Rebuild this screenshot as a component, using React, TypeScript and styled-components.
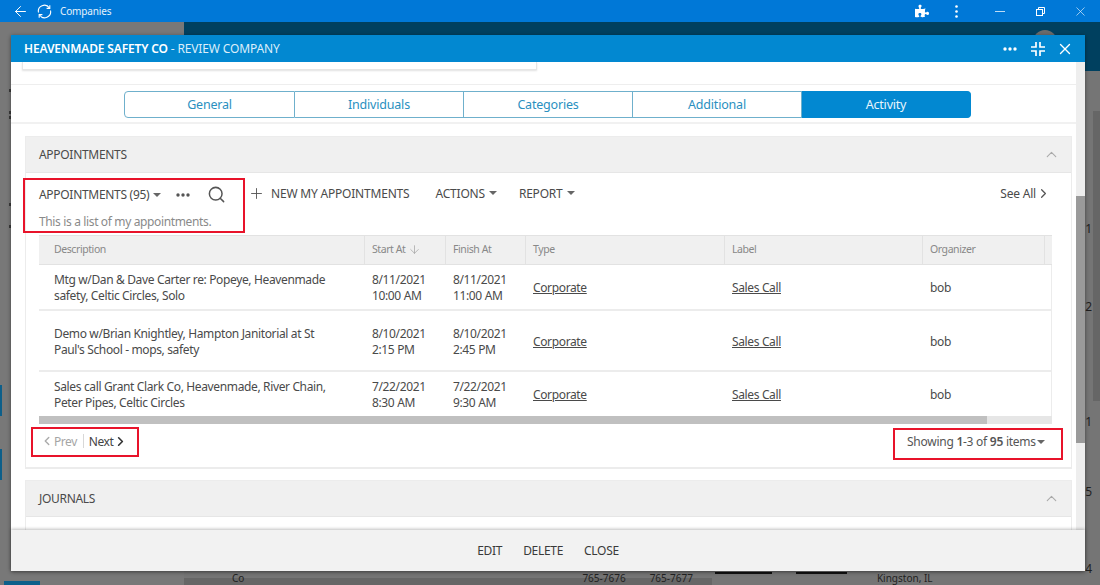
import React from 'react';
import styled, { createGlobalStyle } from 'styled-components';
import { ArrowLeft, ChevronLeft, ChevronRight, ChevronUp, ArrowDown, Plus, Search, X } from 'lucide-react';
import { FaPuzzlePiece } from 'react-icons/fa';

const GlobalStyle = createGlobalStyle`
  html, body {
    margin: 0;
    padding: 0;
    background: #777;
    overflow: hidden;
  }
  * {
    box-sizing: border-box;
  }
`;

const COLUMNS = '326px 81px 80px 199px 198px 122px 1fr';

const Page = styled.div`
  position: relative;
  width: 1100px;
  height: 585px;
  display: flex;
  flex-direction: column;
  overflow: hidden;
  font-family: 'Noto Sans', 'Open Sans', sans-serif;
  font-size: 12px;
  color: #4a4a4a;
`;

const TopBar = styled.div`
  height: 22px;
  flex: none;
  display: flex;
  align-items: center;
  background: #0078d7;
  color: #fff;
  padding-left: 12px;
`;

const TopTitle = styled.span`
  margin-left: 1px;
  font-size: 10px;
  letter-spacing: -0.15px;
  color: #e4f1fb;
`;

const TopRight = styled.div`
  margin-left: auto;
  display: flex;
  align-items: center;
`;

const TopIcon = styled.span<{ $w: number }>`
  width: ${(p) => p.$w}px;
  display: flex;
  align-items: center;
  justify-content: center;
`;

const Behind = styled.div`
  flex: 1;
  min-height: 0;
  display: flex;
  background: #787878;
`;

const BehindLeft = styled.div`
  width: 184px;
  flex: none;
  display: flex;
  flex-direction: column;
`;

const LeftMark = styled.div<{ $top: number }>`
  width: 2px;
  height: 3px;
  margin: ${(p) => p.$top}px 0 0 9px;
  background: #3a3a3a;
`;

const BlueTick = styled.div<{ $top: number }>`
  width: 2px;
  height: 31px;
  margin-top: ${(p) => p.$top}px;
  background: #0d5f8a;
`;

const BlueFoot = styled.div`
  width: 36px;
  height: 4px;
  margin: auto 0 0 4px;
  background: #0d5f8a;
`;

const BehindMain = styled.div`
  flex: 1;
  min-width: 0;
  display: flex;
  flex-direction: column;
  background: #757575;
`;

const Band = styled.div`
  height: 49px;
  background: #00405f;
  flex: none;
  display: flex;
  justify-content: flex-end;
  padding: 8px 43px 0 0;
`;

const Avatar = styled.div`
  width: 24px;
  height: 24px;
  border-radius: 50%;
  background: #6c6c6c;
`;

const BehindMiddle = styled.div`
  flex: 1;
  min-height: 0;
  display: flex;
  justify-content: flex-end;
`;

const BehindNums = styled.div`
  display: flex;
  flex-direction: column;
  align-items: flex-end;
  padding: 151px 1px 0 0;
  font-size: 12px;
  line-height: 14px;
  color: #1f1f1f;
`;

const BehindNum = styled.span<{ $gap: number }>`
  margin-top: ${(p) => p.$gap}px;
`;

const BehindTrack = styled.div`
  width: 7px;
  height: 290px;
  margin-top: 40px;
  background: #666;
`;

const BehindBottom = styled.div`
  height: 14px;
  flex: none;
  display: flex;
  align-items: flex-start;
  font-size: 10px;
  line-height: 14px;
  color: #222;
  background: linear-gradient(#666, #666) 0 7px / 528px 7px no-repeat;
`;

const BottomText = styled.span<{ $left: number }>`
  margin-left: ${(p) => p.$left}px;
  white-space: nowrap;
`;

const BottomRule = styled.span<{ $left: number; $w: number }>`
  width: ${(p) => p.$w}px;
  height: 2px;
  margin: 1px 0 0 ${(p) => p.$left}px;
  background: #111;
`;

const Modal = styled.div`
  position: absolute;
  left: 11px;
  top: 35px;
  width: 1074px;
  height: 536px;
  display: flex;
  flex-direction: column;
  background: #fff;
  box-shadow: 0 1px 4px rgba(0, 0, 0, 0.45);
`;

const ModalHeader = styled.div`
  height: 27px;
  flex: none;
  display: flex;
  align-items: center;
  padding: 0 11px 0 13px;
  background: #0288d1;
  color: #fff;
  font-size: 12px;
`;

const HeaderTitle = styled.div`
  letter-spacing: -0.15px;
  color: #dceefa;
  strong {
    font-weight: 600;
    color: #fff;
  }
`;

const HeaderIcons = styled.div`
  margin-left: auto;
  display: flex;
  align-items: center;
  gap: 11px;
`;

const HeaderDots = styled.span`
  display: flex;
  margin-right: 3px;
`;

const ModalMiddle = styled.div`
  flex: 1;
  min-height: 0;
  display: flex;
`;

const Scroller = styled.div`
  flex: 1;
  min-width: 0;
  overflow: hidden;
`;

const ScrollTrack = styled.div`
  width: 9px;
  flex: none;
  background: #eeeeee;
  padding-top: 134px;
`;

const ScrollThumb = styled.div`
  height: 247px;
  background: #9a9a9a;
`;

const CutCard = styled.div`
  margin-left: 11px;
  width: 515px;
  height: 8px;
  background: #fff;
  border: 1px solid #e6e6e6;
  border-top: 0;
  box-shadow: 0 1px 2px rgba(0, 0, 0, 0.12);
`;

const TabStrip = styled.div`
  margin-top: 14px;
  height: 40px;
  display: flex;
  padding: 6px 0 0 113px;
  border-top: 1px solid #eeeeee;
  border-bottom: 2px solid #f1f1f1;
`;

const Tab = styled.div<{ $active?: boolean }>`
  width: 169px;
  height: 27px;
  display: flex;
  align-items: center;
  justify-content: center;
  font-size: 12.5px;
  letter-spacing: -0.2px;
  color: ${(p) => (p.$active ? '#e8f5fc' : '#2a90bf')};
  background: ${(p) => (p.$active ? '#0288d1' : '#fff')};
  border: 1px solid ${(p) => (p.$active ? '#0288d1' : '#6fb0cc')};
  border-left-width: 0;
  &:first-child {
    width: 171px;
    border-left-width: 1px;
    border-radius: 4px 0 0 4px;
  }
  &:last-child {
    border-radius: 0 4px 4px 0;
  }
`;

const Card = styled.div<{ $top: number }>`
  margin: ${(p) => p.$top}px 4px 0 14px;
  border: 1px solid #ececec;
  border-bottom-width: 2px;
  background: #fff;
`;

const CardHeader = styled.div`
  height: 36px;
  display: flex;
  align-items: center;
  justify-content: space-between;
  padding: 0 11px 0 13px;
  background: #f0f0f0;
  border-bottom: 1px solid #e6e6e6;
  font-size: 12px;
  letter-spacing: -0.3px;
  color: #4a4a4a;
`;

const CardFiller = styled.div`
  height: 30px;
`;

const Toolbar = styled.div`
  display: flex;
  align-items: flex-start;
  padding-top: 5px;
`;

const RedBox = styled.div`
  border: 2px solid #e8132a;
`;

const ListBox = styled(RedBox)`
  margin-left: -3px;
  margin-bottom: 1px;
  width: 222px;
  height: 55px;
  padding: 3px 0 0 14px;
`;

const ListRow = styled.div`
  height: 23px;
  display: flex;
  align-items: center;
`;

const ToolText = styled.span<{ $tight?: boolean }>`
  font-size: 12px;
  letter-spacing: ${(p) => (p.$tight ? '-0.3px' : '-0.2px')};
  color: #4a4a4a;
  white-space: nowrap;
`;

const ListHint = styled.div`
  margin-top: 7px;
  font-size: 12px;
  letter-spacing: -0.36px;
  color: #8a8a8a;
`;

const Caret = styled.span<{ $left: number; $color?: string }>`
  display: inline-block;
  margin-left: ${(p) => p.$left}px;
  border-left: 4.5px solid transparent;
  border-right: 4.5px solid transparent;
  border-top: 4.5px solid ${(p) => p.$color || '#666'};
`;

const ToolActions = styled.div`
  flex: 1;
  height: 26px;
  padding-right: 20px;
  display: flex;
  align-items: center;
  margin-top: 2px;
`;

const ToolItem = styled.div<{ $left: number }>`
  display: flex;
  align-items: center;
  margin-left: ${(p) => p.$left}px;
`;

const SeeAll = styled.div`
  margin-left: auto;
  display: flex;
  align-items: center;
`;

const Table = styled.div`
  margin: 1px 0 0 13px;
  width: 1013px;
`;

const HeadRow = styled.div`
  height: 30px;
  display: grid;
  grid-template-columns: ${COLUMNS};
  background: #f0f0f0;
  border-top: 1px solid #e2e2e2;
  border-bottom: 1px solid #e2e2e2;
`;

const HeadCell = styled.div`
  display: flex;
  align-items: center;
  padding: 0 0 2px 7px;
  font-size: 10.5px;
  letter-spacing: -0.42px;
  color: #888;
  border-right: 1px solid #e2e2e2;
  &:first-child {
    padding-left: 15px;
  }
  &:last-child {
    border-right: 0;
  }
`;

const SortArrow = styled(ArrowDown)`
  margin-left: 3px;
`;

const Row = styled.div<{ $height: number; $last?: boolean }>`
  height: ${(p) => p.$height}px;
  display: grid;
  grid-template-columns: ${COLUMNS};
  border-bottom: ${(p) => (p.$last ? '0' : '2px solid #ececec')};
  border-right: 1px solid #ececec;
`;

const Cell = styled.div`
  display: flex;
  align-items: center;
  padding: 2px 0 0 7px;
  font-size: 12px;
  line-height: 16px;
  letter-spacing: -0.36px;
  color: #4a4a4a;
  &:first-child {
    padding: 2px 18px 0 15px;
  }
`;

const LinkCell = styled.span`
  text-decoration: underline;
`;

const HScroll = styled.div`
  height: 8px;
  background: #e6e6e6;
`;

const HThumb = styled.div`
  width: 948px;
  height: 8px;
  background: #c0c0c0;
`;

const PagerRow = styled.div`
  display: flex;
  justify-content: space-between;
  align-items: flex-start;
  height: 43px;
  padding: 3px 8px 0 5px;
`;

const PagerBox = styled(RedBox)`
  width: 108px;
  height: 30px;
  display: flex;
  align-items: center;
  padding: 0 0 2px 7px;
`;

const PagerLabel = styled.span<{ $muted?: boolean }>`
  font-size: 12px;
  letter-spacing: -0.45px;
  color: ${(p) => (p.$muted ? '#a5a5a5' : '#444')};
`;

const PagerSep = styled.span`
  width: 1px;
  height: 14px;
  background: #d8d8d8;
  margin: 0 5px 0 6px;
`;

const ShowingBox = styled(RedBox)`
  width: 170px;
  height: 32px;
  margin-top: 1px;
  display: flex;
  align-items: center;
  padding: 0 0 5px 12px;
  font-size: 12px;
  letter-spacing: -0.26px;
  color: #555;
  white-space: pre;
  b {
    font-weight: 600;
  }
`;

const ModalFooter = styled.div`
  height: 41px;
  flex: none;
  display: flex;
  align-items: center;
  justify-content: center;
  gap: 21px;
  background: #f2f2f2;
  box-shadow: 0 -1px 3px rgba(0, 0, 0, 0.25);
  position: relative;
`;

const FooterButton = styled.span`
  font-size: 12px;
  letter-spacing: -0.3px;
  color: #3a3a3a;
`;

const Dots = ({ color, size = 14 }: { color: string; size?: number }) => (
  <svg width={size} height="4" viewBox="0 0 14 4" fill={color}>
    <circle cx="2" cy="2" r="1.7" />
    <circle cx="7" cy="2" r="1.7" />
    <circle cx="12" cy="2" r="1.7" />
  </svg>
);

const SyncIcon = () => (
  <svg width="15" height="15" viewBox="0 0 15 15" fill="none" stroke="#fff" strokeWidth="1.1">
    <path d="M1.5 8.5A6 6 0 0 1 12.4 4" />
    <path d="M13.5 6.5A6 6 0 0 1 2.6 11" />
    <path d="M12.8 1.2v3.2H9.6" />
    <path d="M2.2 13.8v-3.2h3.2" />
  </svg>
);

const ShrinkIcon = () => (
  <svg width="14" height="14" viewBox="0 0 14 14" fill="none" stroke="#fff" strokeWidth="1.7">
    <path d="M5 0v5H0" />
    <path d="M9 0v5h5" />
    <path d="M5 14V9H0" />
    <path d="M9 14V9h5" />
  </svg>
);

const RestoreIcon = () => (
  <svg width="9" height="9" viewBox="0 0 9 9" fill="none" stroke="#fff" strokeWidth="1">
    <rect x="0.5" y="2.5" width="6" height="6" />
    <path d="M2.5 2.5v-2h6v6h-2" />
  </svg>
);

const KebabIcon = () => (
  <svg width="3" height="13" viewBox="0 0 3 13" fill="#fff">
    <circle cx="1.5" cy="1.5" r="1.3" />
    <circle cx="1.5" cy="6.5" r="1.3" />
    <circle cx="1.5" cy="11.5" r="1.3" />
  </svg>
);

const rows = [
  {
    height: 46,
    description: 'Mtg w/Dan & Dave Carter re: Popeye, Heavenmade safety, Celtic Circles, Solo',
    start: ['8/11/2021', '10:00 AM'],
    finish: ['8/11/2021', '11:00 AM'],
  },
  {
    height: 61,
    description: "Demo w/Brian Knightley, Hampton Janitorial at St Paul's School - mops, safety",
    start: ['8/10/2021', '2:15 PM'],
    finish: ['8/10/2021', '2:45 PM'],
  },
  {
    height: 44,
    description: 'Sales call Grant Clark Co, Heavenmade, River Chain, Peter Pipes, Celtic Circles',
    start: ['7/22/2021', '8:30 AM'],
    finish: ['7/22/2021', '9:30 AM'],
  },
];

const tabs = ['General', 'Individuals', 'Categories', 'Additional', 'Activity'];
const nums = [
  { n: '1', gap: 0 },
  { n: '2', gap: 64 },
  { n: '1', gap: 101 },
  { n: '5', gap: 56 },
  { n: '4', gap: 63 },
];

const App: React.FC = () => (
  <Page>
    <GlobalStyle />
    <TopBar>
      <ArrowLeft size={17} color="#fff" strokeWidth={1.4} />
      <TopIcon $w={30}>
        <SyncIcon />
      </TopIcon>
      <TopTitle>Companies</TopTitle>
      <TopRight>
        <TopIcon $w={20}>
          <FaPuzzlePiece size={14} color="#fff" />
        </TopIcon>
        <TopIcon $w={48}>
          <KebabIcon />
        </TopIcon>
        <TopIcon $w={40}>
          <svg width="10" height="1" viewBox="0 0 10 1" fill="#bcdcf5">
            <rect width="10" height="1" />
          </svg>
        </TopIcon>
        <TopIcon $w={40}>
          <RestoreIcon />
        </TopIcon>
        <TopIcon $w={40}>
          <X size={15} color="#d9ecfb" strokeWidth={1.1} />
        </TopIcon>
      </TopRight>
    </TopBar>

    <Behind>
      <BehindLeft>
        <LeftMark $top={67} />
        <LeftMark $top={19} />
        <LeftMark $top={2} />
        <LeftMark $top={84} />
        <LeftMark $top={19} />
        <BlueTick $top={157} />
        <BlueTick $top={33} />
        <BlueFoot />
      </BehindLeft>
      <BehindMain>
        <Band>
          <Avatar />
        </Band>
        <BehindMiddle>
          <BehindNums>
            {nums.map((item, i) => (
              <BehindNum key={i} $gap={item.gap}>
                {item.n}
              </BehindNum>
            ))}
          </BehindNums>
          <BehindTrack />
        </BehindMiddle>
        <BehindBottom>
          <BottomText $left={48}>Co</BottomText>
          <BottomText $left={338}>765-7676</BottomText>
          <BottomText $left={24}>765-7677</BottomText>
          <BottomRule $left={22} $w={57} />
          <BottomRule $left={24} $w={51} />
          <BottomText $left={30}>Kingston, IL</BottomText>
        </BehindBottom>
      </BehindMain>
    </Behind>

    <Modal>
      <ModalHeader>
        <HeaderTitle>
          <strong>HEAVENMADE SAFETY CO</strong> - REVIEW COMPANY
        </HeaderTitle>
        <HeaderIcons>
          <HeaderDots>
            <Dots color="#fff" />
          </HeaderDots>
          <ShrinkIcon />
          <X size={18} color="#fff" strokeWidth={1.8} />
        </HeaderIcons>
      </ModalHeader>

      <ModalMiddle>
        <Scroller>
          <CutCard />
          <TabStrip>
            {tabs.map((t) => (
              <Tab key={t} $active={t === 'Activity'}>
                {t}
              </Tab>
            ))}
          </TabStrip>

          <Card $top={12}>
            <CardHeader>
              APPOINTMENTS
              <ChevronUp size={17} color="#aaa" strokeWidth={1.6} />
            </CardHeader>
            <Toolbar>
              <ListBox>
                <ListRow>
                  <ToolText $tight>APPOINTMENTS (95)</ToolText>
                  <Caret $left={4} />
                  <ToolItem $left={15}>
                    <Dots color="#555" />
                  </ToolItem>
                  <ToolItem $left={17}>
                    <Search size={19} color="#555" strokeWidth={1.9} />
                  </ToolItem>
                </ListRow>
                <ListHint>This is a list of my appointments.</ListHint>
              </ListBox>
              <ToolActions>
                <ToolItem $left={3}>
                  <Plus size={17} color="#555" strokeWidth={1.3} />
                </ToolItem>
                <ToolItem $left={6}>
                  <ToolText>NEW MY APPOINTMENTS</ToolText>
                </ToolItem>
                <ToolItem $left={26}>
                  <ToolText>ACTIONS</ToolText>
                  <Caret $left={4} />
                </ToolItem>
                <ToolItem $left={22}>
                  <ToolText>REPORT</ToolText>
                  <Caret $left={4} />
                </ToolItem>
                <SeeAll>
                  <ToolText>See All</ToolText>
                  <ChevronRight size={15} color="#555" strokeWidth={2} />
                </SeeAll>
              </ToolActions>
            </Toolbar>

            <Table>
              <HeadRow>
                <HeadCell>Description</HeadCell>
                <HeadCell>
                  Start At
                  <SortArrow size={13} color="#999" strokeWidth={1.2} />
                </HeadCell>
                <HeadCell>Finish At</HeadCell>
                <HeadCell>Type</HeadCell>
                <HeadCell>Label</HeadCell>
                <HeadCell>Organizer</HeadCell>
                <HeadCell />
              </HeadRow>
              {rows.map((r, i) => (
                <Row key={r.description} $height={r.height} $last={i === rows.length - 1}>
                  <Cell>
                    <span>{r.description}</span>
                  </Cell>
                  <Cell>
                    <span>
                      {r.start[0]}
                      <br />
                      {r.start[1]}
                    </span>
                  </Cell>
                  <Cell>
                    <span>
                      {r.finish[0]}
                      <br />
                      {r.finish[1]}
                    </span>
                  </Cell>
                  <Cell>
                    <LinkCell>Corporate</LinkCell>
                  </Cell>
                  <Cell>
                    <LinkCell>Sales Call</LinkCell>
                  </Cell>
                  <Cell>bob</Cell>
                  <Cell />
                </Row>
              ))}
              <HScroll>
                <HThumb />
              </HScroll>
            </Table>

            <PagerRow>
              <PagerBox>
                <ChevronLeft size={14} color="#aaa" strokeWidth={2.4} />
                <PagerLabel $muted>Prev</PagerLabel>
                <PagerSep />
                <PagerLabel>Next</PagerLabel>
                <ChevronRight size={15} color="#333" strokeWidth={2.6} />
              </PagerBox>
              <ShowingBox>
                Showing <b>1</b>-3 of <b>95</b> items
                <Caret $left={1} />
              </ShowingBox>
            </PagerRow>
          </Card>

          <Card $top={11}>
            <CardHeader>
              JOURNALS
              <ChevronUp size={17} color="#aaa" strokeWidth={1.6} />
            </CardHeader>
            <CardFiller />
          </Card>
        </Scroller>
        <ScrollTrack>
          <ScrollThumb />
        </ScrollTrack>
      </ModalMiddle>

      <ModalFooter>
        <FooterButton>EDIT</FooterButton>
        <FooterButton>DELETE</FooterButton>
        <FooterButton>CLOSE</FooterButton>
      </ModalFooter>
    </Modal>
  </Page>
);

export default App;
